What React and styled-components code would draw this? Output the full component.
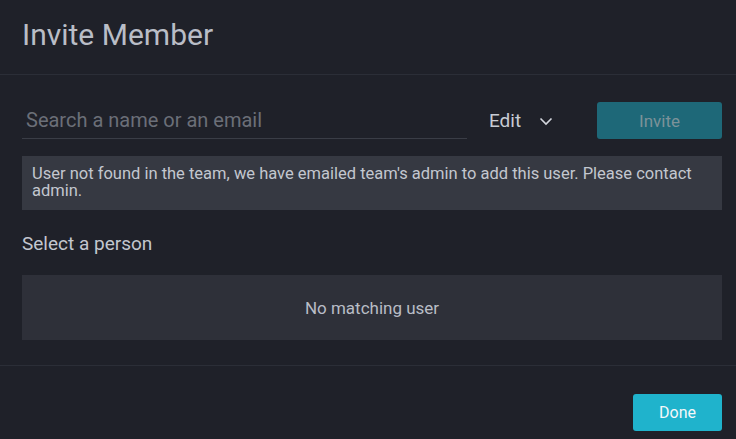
import React, { useState } from "react";
import styled, { createGlobalStyle } from "styled-components";

const GlobalStyle = createGlobalStyle`
  html, body {
    margin: 0;
    padding: 0;
    background: #1f2129;
    font-family: Roboto, "Liberation Sans", sans-serif;
  }
`;

const Dialog = styled.div`
  width: 736px;
  height: 439px;
  background: #1f2129;
  display: flex;
  flex-direction: column;
`;

const Header = styled.div`
  height: 75px;
  box-sizing: border-box;
  border-bottom: 1px solid #2b2e37;
  padding: 16px 22px 0 22px;
`;

const Title = styled.h1`
  margin: 0;
  font-size: 30px;
  font-weight: 400;
  color: #b9bdc6;
  line-height: 38px;
`;

const Body = styled.div`
  padding: 27px 14px 25px 22px;
  border-bottom: 1px solid #2b2e37;
  display: flex;
  flex-direction: column;
`;

const SearchRow = styled.div`
  display: flex;
  align-items: center;
  height: 37px;
`;

const SearchInput = styled.input`
  width: 445px;
  height: 37px;
  box-sizing: border-box;
  background: transparent;
  border: 0;
  border-bottom: 1px solid #3a3d46;
  color: #c8ccd4;
  font-family: inherit;
  font-size: 20px;
  padding: 0 0 1px 4px;
  outline: none;

  &::placeholder {
    color: #6b6f78;
  }
`;

const RoleSelect = styled.button`
  display: flex;
  align-items: center;
  margin-left: 22px;
  background: transparent;
  border: 0;
  padding: 0;
  color: #c8ccd4;
  font-family: inherit;
  font-size: 19px;
  gap: 18px;
  width: 108px;
`;

const InviteButton = styled.button`
  width: 125px;
  height: 37px;
  background: #1e6878;
  border: 0;
  border-radius: 3px;
  color: #7c9299;
  font-family: inherit;
  font-size: 17px;
`;

const Notice = styled.div`
  margin-top: 17px;
  width: 700px;
  box-sizing: border-box;
  background: #363942;
  color: #c3c7cf;
  font-size: 16.5px;
  line-height: 17px;
  padding: 9px 10px 11px 10px;
`;

const SectionLabel = styled.div`
  margin-top: 24px;
  font-size: 19px;
  color: #c3c7cf;
  line-height: 20px;
`;

const EmptyList = styled.div`
  margin-top: 21px;
  width: 700px;
  height: 65px;
  background: #2e3039;
  display: flex;
  align-items: center;
  justify-content: center;
  color: #b9bdc6;
  font-size: 17px;
`;

const Footer = styled.div`
  display: flex;
  justify-content: flex-end;
  padding: 28px 14px 0 0;
`;

const DoneButton = styled.button`
  width: 89px;
  height: 37px;
  background: #1fb3cc;
  border: 0;
  border-radius: 3px;
  color: #f4f8fa;
  font-family: inherit;
  font-size: 16px;
`;

const Chevron = () => (
  <svg width="14" height="14" viewBox="0 0 14 14" fill="none">
    <path d="M1.5 4.5l5.5 5.5 5.5-5.5" stroke="#d4d7de" strokeWidth="1.6" />
  </svg>
);

const App = () => {
  const [query, setQuery] = useState("");

  return (
    <Dialog>
      <GlobalStyle />
      <Header>
        <Title>Invite Member</Title>
      </Header>
      <Body>
        <SearchRow>
          <SearchInput
            placeholder="Search a name or an email"
            value={query}
            onChange={(e) => setQuery(e.target.value)}
          />
          <RoleSelect>
            Edit <Chevron />
          </RoleSelect>
          <InviteButton disabled>Invite</InviteButton>
        </SearchRow>
        <Notice>
          User not found in the team, we have emailed team's admin to add this
          user. Please contact admin.
        </Notice>
        <SectionLabel>Select a person</SectionLabel>
        <EmptyList>No matching user</EmptyList>
      </Body>
      <Footer>
        <DoneButton>Done</DoneButton>
      </Footer>
    </Dialog>
  );
};

export default App;
